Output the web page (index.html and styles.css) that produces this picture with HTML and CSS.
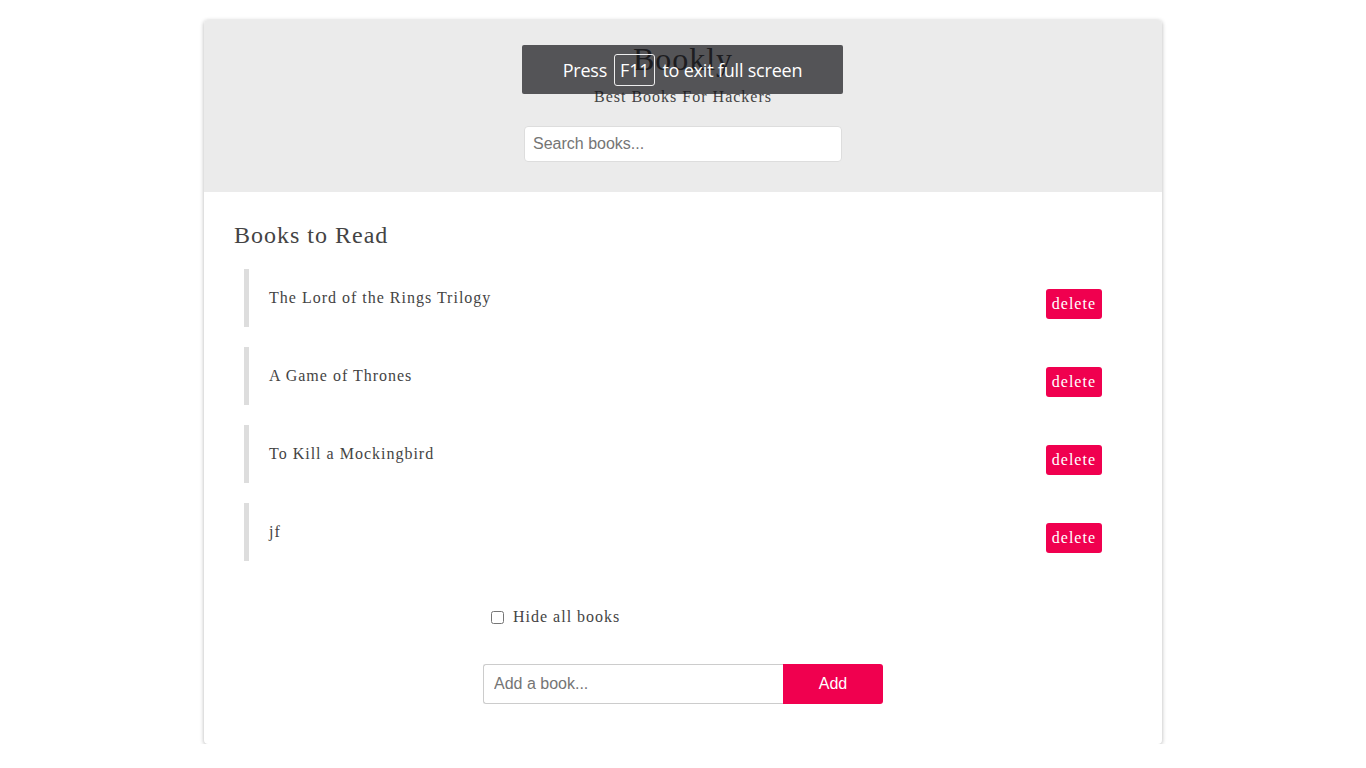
FILE: index.html
```html
<!DOCTYPE html>
<html>
<head>
<meta charset="utf-8">
<title>Bookly</title>
<link rel="stylesheet" href="styles.css">
</head>
<body>
<div class="wrapper">
  <header class="header">
    <h1 class="title">Bookly</h1>
    <p class="subtitle">Best Books For Hackers</p>
    <input class="search" type="text" placeholder="Search books...">
  </header>
  <section class="books">
    <h2 class="heading">Books to Read</h2>
    <ul class="list">
      <li class="item"><span class="name">The Lord of the Rings Trilogy</span><button class="delete">delete</button></li>
      <li class="item"><span class="name">A Game of Thrones</span><button class="delete">delete</button></li>
      <li class="item"><span class="name">To Kill a Mockingbird</span><button class="delete">delete</button></li>
      <li class="item"><span class="name">jf</span><button class="delete">delete</button></li>
    </ul>
    <div class="hide-row">
      <input class="check" type="checkbox" id="hide">
      <label for="hide" class="hide-label">Hide all books</label>
    </div>
    <form class="add-form">
      <input class="add-input" type="text" placeholder="Add a book...">
      <button class="add-btn" type="button">Add</button>
    </form>
  </section>
</div>
<div class="fs-notice">
  <span>Press</span><span class="key">F11</span><span>to exit full screen</span>
</div>
</body>
</html>
```
FILE: styles.css
```css
html, body {
  margin: 0;
  padding: 0;
  background: #fff;
}
body {
  font-family: "Liberation Serif", "Times New Roman", serif;
  color: #444;
  letter-spacing: 1px;
}
.wrapper {
  width: 958px;
  box-sizing: border-box;
  margin: 20px auto 0;
  border-radius: 4px;
  box-shadow: 0 1px 4px rgba(0,0,0,0.3);
  overflow: hidden;
  background: #fff;
}
.header {
  background: #ebebeb;
  padding: 21px 0 30px;
  display: flex;
  flex-direction: column;
  align-items: center;
}
.title {
  margin: 0;
  font-size: 32px;
  font-weight: normal;
  color: #333;
  line-height: normal;
}
.subtitle {
  margin: 10px 0 0;
  font-size: 16px;
  color: #444;
}
.search {
  margin-top: 20px;
  width: 318px;
  height: 36px;
  box-sizing: border-box;
  border: 1px solid #ddd;
  border-radius: 4px;
  background: #fff;
  padding: 0 8px;
  font-family: "Liberation Sans", Arial, sans-serif;
  font-size: 16px;
  letter-spacing: 0;
  color: #333;
  outline: none;
}
.search::placeholder, .add-input::placeholder {
  color: #757575;
}
.books {
  padding: 30px 30px 40px;
}
.heading {
  margin: 0;
  font-size: 24px;
  font-weight: normal;
  color: #444;
  line-height: normal;
}
.list {
  list-style: none;
  margin: 20px 0 0;
  padding: 0 10px;
  display: flex;
  flex-direction: column;
  gap: 20px;
}
.item {
  border-left: 5px solid #ddd;
  padding: 20px 20px 20px 20px;
  display: flex;
  justify-content: space-between;
  align-items: flex-start;
  height: 18px;
  font-size: 16px;
  line-height: 18px;
}
.name {
  color: #444;
}
.delete {
  background: #f0004f;
  color: #fff;
  border: none;
  border-radius: 3px;
  padding: 6px 6px;
  font-family: "Liberation Serif", "Times New Roman", serif;
  font-size: 16px;
  line-height: 18px;
  letter-spacing: 1px;
  cursor: pointer;
}
.hide-row {
  width: 400px;
  box-sizing: border-box;
  margin: 47px auto 0;
  padding-left: 8px;
  display: flex;
  align-items: center;
  height: 18px;
}
.check {
  margin: 0 9px 0 0;
  width: 13px;
  height: 13px;
}
.hide-label {
  font-size: 16px;
  line-height: 18px;
  color: #444;
}
.add-form {
  margin: 38px auto 0;
  width: 400px;
  display: flex;
}
.add-input {
  width: 300px;
  height: 40px;
  box-sizing: border-box;
  border: 1px solid #ccc;
  border-right: none;
  border-radius: 3px 0 0 3px;
  padding: 0 10px;
  font-family: "Liberation Sans", Arial, sans-serif;
  font-size: 16px;
  letter-spacing: 0;
  outline: none;
}
.add-btn {
  width: 100px;
  height: 40px;
  border: none;
  background: #f0004f;
  color: #fff;
  border-radius: 0 3px 3px 0;
  font-family: "Liberation Sans", Arial, sans-serif;
  font-size: 16px;
  letter-spacing: 0;
  cursor: pointer;
}
.fs-notice {
  position: absolute;
  left: 522px;
  top: 45px;
  width: 321px;
  height: 49px;
  box-sizing: border-box;
  background: rgba(20, 20, 24, 0.7);
  border-radius: 2px;
  display: flex;
  align-items: center;
  justify-content: center;
  gap: 7px;
  color: #fff;
  font-family: "Open Sans", "DejaVu Sans", sans-serif;
  font-size: 18px;
  letter-spacing: -0.2px;
}
.key {
  border: 1px solid #eee;
  border-radius: 3px;
  padding: 4px 5px;
  line-height: 22px;
}
```
